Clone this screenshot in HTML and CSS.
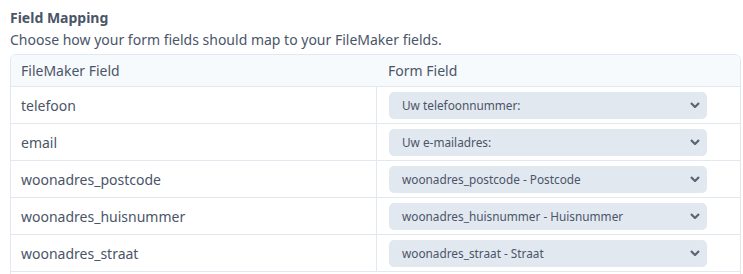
FILE: index.html
```html
<!DOCTYPE html>
<html lang="en">
<head>
  <meta charset="UTF-8">
  <title>Field Mapping</title>
  <link rel="stylesheet" href="styles.css">
</head>
<body>
  <section class="mapping">
    <h3 class="mapping-title">Field Mapping</h3>
    <p class="mapping-desc">Choose how your form fields should map to your FileMaker fields.</p>

    <div class="table-wrap">
      <table class="mapping-table">
        <thead>
          <tr>
            <th>FileMaker Field</th>
            <th>Form Field</th>
          </tr>
        </thead>
        <tbody>
          <tr>
            <td>telefoon</td>
            <td>
              <div class="select">
                <span>Uw telefoonnummer:</span>
                <svg class="chevron" viewBox="0 0 10 6"><path d="M1 1l4 4 4-4"/></svg>
              </div>
            </td>
          </tr>
          <tr>
            <td>email</td>
            <td>
              <div class="select">
                <span>Uw e-mailadres:</span>
                <svg class="chevron" viewBox="0 0 10 6"><path d="M1 1l4 4 4-4"/></svg>
              </div>
            </td>
          </tr>
          <tr>
            <td>woonadres_postcode</td>
            <td>
              <div class="select">
                <span>woonadres_postcode - Postcode</span>
                <svg class="chevron" viewBox="0 0 10 6"><path d="M1 1l4 4 4-4"/></svg>
              </div>
            </td>
          </tr>
          <tr>
            <td>woonadres_huisnummer</td>
            <td>
              <div class="select">
                <span>woonadres_huisnummer - Huisnummer</span>
                <svg class="chevron" viewBox="0 0 10 6"><path d="M1 1l4 4 4-4"/></svg>
              </div>
            </td>
          </tr>
          <tr>
            <td>woonadres_straat</td>
            <td>
              <div class="select">
                <span>woonadres_straat - Straat</span>
                <svg class="chevron" viewBox="0 0 10 6"><path d="M1 1l4 4 4-4"/></svg>
              </div>
            </td>
          </tr>
        </tbody>
      </table>
    </div>
  </section>
</body>
</html>
```

FILE: styles.css
```css
* {
  margin: 0;
  padding: 0;
  box-sizing: border-box;
}

body {
  font-family: 'Noto Sans', sans-serif;
  color: #4a5568;
  background: #fff;
  padding: 7px 10px 0;
}

.mapping-title {
  font-size: 14px;
  font-weight: 700;
  line-height: 22px;
}

.mapping-desc {
  font-size: 14px;
  line-height: 22px;
  margin-bottom: 3px;
}

.table-wrap {
  width: 731px;
  border: 1px solid #e2e8f0;
  border-radius: 6px;
  padding-bottom: 10px;
  overflow: hidden;
}

.mapping-table {
  width: 100%;
  border-collapse: separate;
  border-spacing: 0;
  font-size: 14px;
}

.mapping-table th {
  background: #f7fafc;
  font-weight: 400;
  text-align: left;
  height: 32px;
  padding: 0 10px;
  border-bottom: 1px solid #e2e8f0;
}

.mapping-table th:first-child {
  width: 366px;
}

.mapping-table th:last-child {
  padding-left: 11px;
}

.mapping-table td {
  height: 37px;
  padding: 0 10px;
  border-bottom: 1px solid #e2e8f0;
}

.mapping-table td:first-child {
  border-right: 1px solid #e2e8f0;
}

.mapping-table td:last-child {
  padding: 0 12px;
}

.select {
  display: flex;
  align-items: center;
  justify-content: space-between;
  width: 318px;
  height: 27px;
  padding: 0 7px 0 13px;
  background: #e2e8f0;
  border-radius: 5px;
  font-size: 11.8px;
  color: #4a5568;
}

.chevron {
  width: 10px;
  height: 6px;
  fill: none;
  stroke: #5a6474;
  stroke-width: 2.2;
}
```
